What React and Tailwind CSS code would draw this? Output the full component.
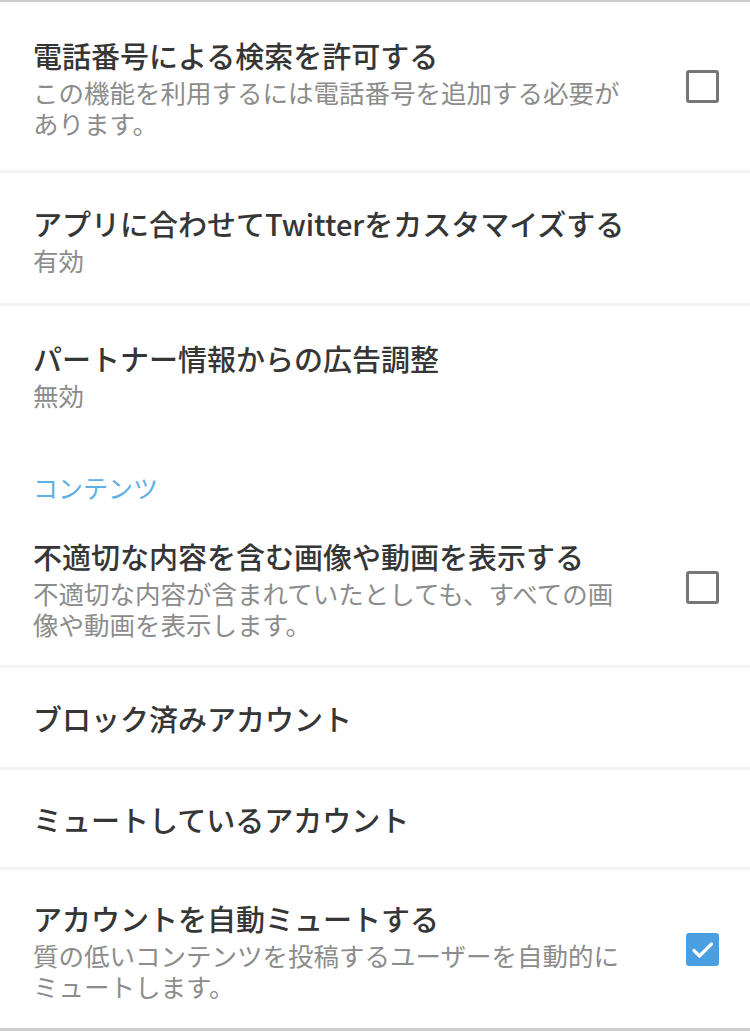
import React from "react";

function Checkbox({ checked }) {
  if (checked) {
    return (
      <div className="w-[33px] h-[33px] rounded-[3px] bg-[#4a9fe2] flex items-center justify-center shrink-0">
        <svg viewBox="0 0 33 33" className="w-[33px] h-[33px]" fill="none" stroke="white" strokeWidth="3.2" strokeLinecap="round" strokeLinejoin="round">
          <path d="M8 17.5l5.5 5.5L25.5 11" />
        </svg>
      </div>
    );
  }
  return <div className="w-[33px] h-[33px] rounded-[3px] border-[3px] border-[#767676] shrink-0" />;
}

function Title({ children }) {
  return <div className="text-[29px] leading-[42px] font-medium text-[#363636] whitespace-nowrap">{children}</div>;
}

function Sub({ children }) {
  return <div className="text-[25.5px] leading-[31px] text-[#8c8c8c]">{children}</div>;
}

export default function App() {
  return (
    <div className="w-[750px] h-[1031px] bg-white flex flex-col overflow-hidden font-['Noto_Sans_CJK_JP','Noto_Sans',sans-serif]">
      <div className="h-[2px] bg-[#cfcfcf] shrink-0" />
      {/* Row 1 */}
      <div className="h-[168px] shrink-0 flex items-center pl-[33px] pr-[31px]">
        <div className="w-[600px]">
          <Title>電話番号による検索を許可する</Title>
          <Sub>この機能を利用するには電話番号を追加する必要があります。</Sub>
        </div>
        <div className="flex-1" />
        <Checkbox />
      </div>
      <div className="h-[3px] bg-[#f3f3f3] shrink-0" />
      {/* Row 2 */}
      <div className="h-[130px] shrink-0 flex items-center pl-[33px] pr-[31px]">
        <div>
          <Title>アプリに合わせてTwitterをカスタマイズする</Title>
          <Sub>有効</Sub>
        </div>
      </div>
      <div className="h-[3px] bg-[#f3f3f3] shrink-0" />
      {/* Row 3 + header + row 4 */}
      <div className="h-[359px] shrink-0 flex flex-col pl-[33px] pr-[31px] pt-[31px]">
        <Title>パートナー情報からの広告調整</Title>
        <Sub>無効</Sub>
        <div className="mt-[62px] text-[25px] leading-[31px] text-[#5db0e6]">コンテンツ</div>
        <div className="mt-[32px] flex items-center">
          <div className="w-[600px]">
            <Title>不適切な内容を含む画像や動画を表示する</Title>
            <Sub>不適切な内容が含まれていたとしても、すべての画像や動画を表示します。</Sub>
          </div>
          <div className="flex-1" />
          <Checkbox />
        </div>
      </div>
      <div className="h-[3px] bg-[#f3f3f3] shrink-0" />
      {/* Row 5 */}
      <div className="h-[99px] shrink-0 flex items-center pl-[33px] pr-[31px]">
        <Title>ブロック済みアカウント</Title>
      </div>
      <div className="h-[3px] bg-[#f3f3f3] shrink-0" />
      {/* Row 6 */}
      <div className="h-[97px] shrink-0 flex items-center pl-[33px] pr-[31px]">
        <Title>ミュートしているアカウント</Title>
      </div>
      <div className="h-[3px] bg-[#f3f3f3] shrink-0" />
      {/* Row 7 */}
      <div className="h-[158px] shrink-0 flex items-center pl-[33px] pr-[31px]">
        <div className="w-[600px]">
          <Title>アカウントを自動ミュートする</Title>
          <Sub>質の低いコンテンツを投稿するユーザーを自動的にミュートします。</Sub>
        </div>
        <div className="flex-1" />
        <Checkbox checked />
      </div>
      <div className="h-[3px] bg-[#cfcfcf] shrink-0" />
    </div>
  );
}
